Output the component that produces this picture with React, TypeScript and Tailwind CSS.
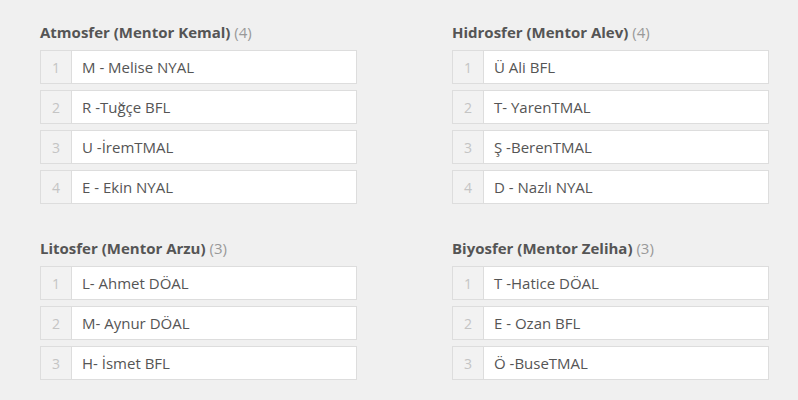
const groups = [
  {
    title: "Atmosfer (Mentor Kemal)",
    members: ["M - Melise NYAL", "R -Tuğçe BFL", "U -İremTMAL", "E - Ekin NYAL"],
  },
  {
    title: "Hidrosfer (Mentor Alev)",
    members: ["Ü Ali BFL", "T- YarenTMAL", "Ş -BerenTMAL", "D - Nazlı NYAL"],
  },
  {
    title: "Litosfer (Mentor Arzu)",
    members: ["L- Ahmet DÖAL", "M- Aynur DÖAL", "H- İsmet BFL"],
  },
  {
    title: "Biyosfer (Mentor Zeliha)",
    members: ["T -Hatice DÖAL", "E - Ozan BFL", "Ö -BuseTMAL"],
  },
];

function Group({ title, members }: { title: string; members: string[] }) {
  return (
    <div>
      <h3 className="h-5 leading-5 text-[15px] font-bold text-[#555]">
        {title} <span className="font-normal text-[#999]">({members.length})</span>
      </h3>
      <ol className="mt-2 flex flex-col gap-[6px]">
        {members.map((m, i) => (
          <li key={i} className="flex h-[34px] border border-[#ddd] bg-white">
            <span className="w-[31px] flex-shrink-0 border-r border-[#ddd] bg-[#f2f2f2] flex items-center justify-center text-[14px] text-[#c4c4c4]">
              {i + 1}
            </span>
            <span className="flex items-center pl-[10px] text-[15px] text-[#555]">{m}</span>
          </li>
        ))}
      </ol>
    </div>
  );
}

export default function App() {
  return (
    <div
      className="w-[798px] h-[400px] bg-[#f0f0f0] pl-10 pt-[22px]"
      style={{ fontFamily: '"Open Sans", sans-serif' }}
    >
      <div className="grid grid-cols-[317px_317px] gap-x-[95px] gap-y-[34px]">
        {groups.map((g) => (
          <Group key={g.title} title={g.title} members={g.members} />
        ))}
      </div>
    </div>
  );
}
